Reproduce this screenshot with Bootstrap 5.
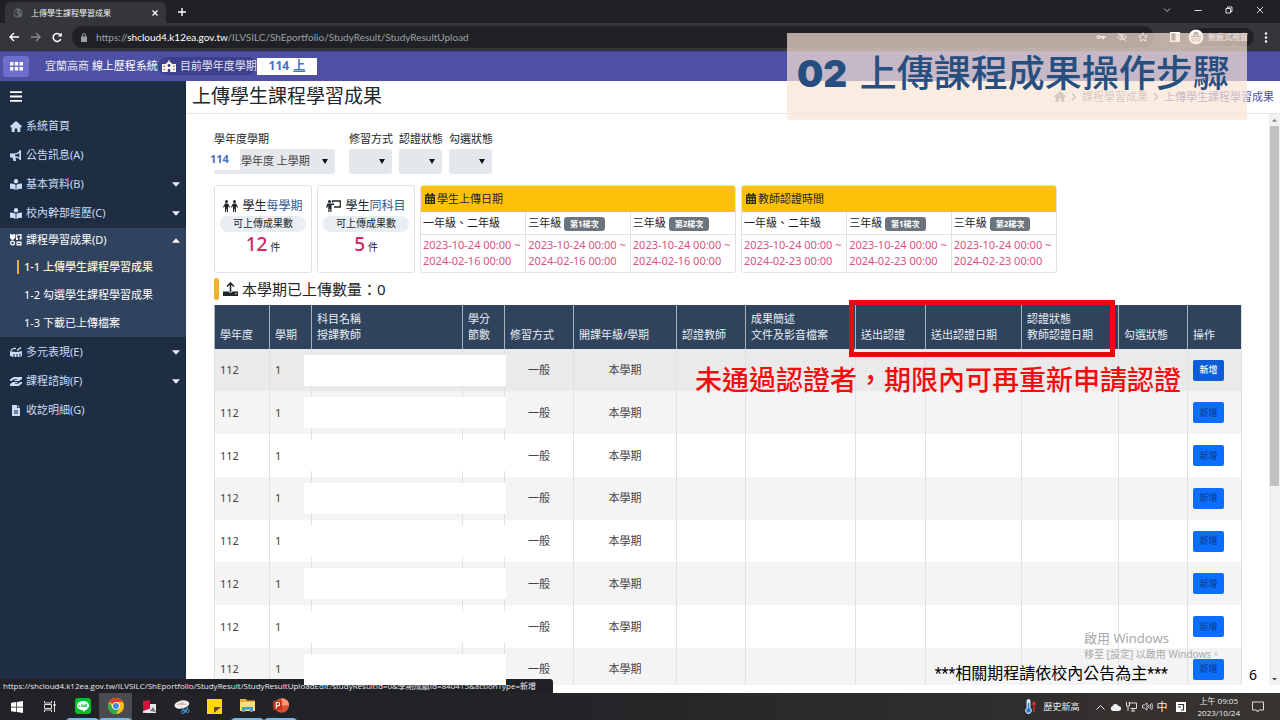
<!DOCTYPE html>
<html lang="zh-Hant">
<head>
<meta charset="utf-8">
<meta name="viewport" content="width=device-width, initial-scale=1">
<title>上傳學生課程學習成果</title>
<link rel="stylesheet" href="https://cdn.jsdelivr.net/npm/bootstrap@5.3.0/dist/css/bootstrap.min.css">
<style>
body{font:11px/16px "Noto Sans","Noto Sans CJK TC",sans-serif;color:#212529;height:100vh;overflow:hidden}
a{text-decoration:none;color:inherit}
svg{display:block;flex:none}
button{font:inherit}
/* browser frame */
.chrome-ui{font-family:"Open Sans","Noto Sans CJK TC",sans-serif;color:#f1f3f4}
.tabstrip{background:#202124;height:23px;padding-left:5px}
.tab-item{background:#35363a;width:161px;height:21px;margin-top:2px;border-radius:6px 6px 0 0;padding:0 8px;font-size:8px}
.toolbar{background:#35363a;height:28px;padding:0 12px 0 8px}
.omnibox{background:#202124;border-radius:11px;height:22px;color:#9aa0a6;padding:0 6px 0 8px}
.url{font-family:Lato,sans-serif;font-size:10px}
.plain{background:none;border:0;padding:0;color:inherit;display:flex}
.incog{background:#202124;border-radius:11px;height:18px;font-size:8px;width:66px}
/* system header */
.sysbar{background:#4d50a3;height:30px;color:#e4e5f6;border-top:1px solid #43458c}
.appsbtn{background:#6c70cc;border-radius:3px;width:26px;height:21px;color:#fff;justify-content:center;align-items:center}
.termpill{background:#3c3f8c;border-radius:9px;height:18px;padding:0 0 0 4px;gap:4px}
.termval{background:#fff;color:#4472c4;width:60px;height:17px;font-size:12px}
/* side menu */
.side{width:186px;background:#1e2d42;color:#c9dcf5}
.burger{height:31px;padding-left:10px;color:#fff}
.side a,.side .fold{height:29px;padding:0 6px 0 10px;gap:4px;display:flex;align-items:center;width:100%}
.side .open{background:#30435e;color:#fff;margin-bottom:1px}
.side .open .fold{height:25px}
.side .open a{height:28px;padding-left:24px;white-space:nowrap}
.side .open a.now{padding-left:17px;color:#fdf3cf;font-weight:500}
.now::before{content:"";width:2px;height:14px;background:#eeb033;margin-right:1px}
.arr{margin-left:auto}
/* content */
.titlebar{height:33px;border-bottom:1px solid #dee6ea;padding:0 6px}
.titlebar h1{font-size:19px;line-height:30px}
.crumbs{font-size:11px;color:#868e96;gap:5px}
.body-pad{padding:17px 28px 0}
.filters label{display:block;height:18px}
.filters select{border:0;background:#e4e7eb url("data:image/svg+xml,%3Csvg xmlns='http://www.w3.org/2000/svg' width='6' height='5'%3E%3Cpath d='M0 0h6L3 5z' fill='%23111'/%3E%3C/svg%3E") no-repeat right 7px center;border-radius:3px;height:25px;width:43px;appearance:none;color:#444;font-size:11px;padding:0 0 0 8px;display:block}
.filters select.wide{width:121px}
.yearfix{position:absolute;left:-4px;top:17px;width:30px;height:22px;background:#fff;color:#4472c4;font-size:11px;line-height:22px}
.quota{border:1px solid #dee2e6;border-radius:3px;width:98px;height:88px;padding-top:10px}
.quota h2{font-size:12px;line-height:20px}
.quota .kind{color:#36598f}
.quota .pill{background:#e9eef3;border-radius:8px;width:86px;height:16px;line-height:15px;font-size:10px}
.quota strong{font-size:19px;line-height:24px;font-weight:500;color:#d4245f}
.quota small{font-size:10px}
.period{width:316px;height:88px;border:1px solid #dee2e6;border-radius:3px;overflow:hidden}
.period h2{background:#ffc107;height:26px;padding-left:4px;font-size:11px}
.period table{width:100%;table-layout:fixed}
.period th{font-weight:400;height:23px;padding:0 2px;white-space:nowrap;border-bottom:1px solid #dee2e6}
.period td{color:#d9547f;padding:2px 0 3px 2px;white-space:nowrap}
.period th+th,.period td+td{border-left:1px solid #dee2e6}
.batch{background:#6c757d;font-size:8px;line-height:8px;padding:3px 6px;border-radius:3px}
.count{font-size:15px;height:22px}
.count::before{content:"";width:5px;height:22px;border-radius:3px;background:#f0b030;margin-right:4px}
.grid{table-layout:fixed;width:100%;height:386px}
.grid th{background:#2f435d;color:#e8eef5;font-weight:400;height:44px;padding:6px 0 6px 5px;vertical-align:bottom;border-left:1px solid #aab4c0;white-space:nowrap}
.grid td{padding:0 0 0 5px;border-left:1px solid #dee2e6;position:relative;color:#444;white-space:nowrap}
.grid th:last-child,.grid td:last-child{border-right:1px solid #dee2e6}
.grid td.mid{padding:0;text-align:center}
.grid tbody tr:nth-child(even){background:#f4f4f4}
.grid tbody tr:first-child{background:#eaeaea}
.hide{position:absolute;left:-8px;top:6px;width:202px;height:31px;background:#fff;z-index:5}
.addbtn{background:#0d6efd;border:0;border-radius:2px;width:31px;height:21px;font-size:9px;color:#0b3a80;padding:0;display:block}
tr:first-child .addbtn{background:#0b5ed7;color:#fff;font-weight:500}
.scroll{width:11px;background:#f1f1f1;padding:0 1px}
.thumb{background:#c1c1c1;height:63%}
/* slide annotations */
.banner{position:absolute;right:33px;top:33px;width:460px;height:87px;background:rgba(249,228,214,.7);color:#264f80;font-size:37px;line-height:80px;padding-left:10px;white-space:nowrap;z-index:6;font-weight:500}
.banner b{font-family:Inter,sans-serif;font-weight:900;margin-right:3px}
.redbox{position:absolute;right:126px;top:-5px;width:266px;height:57px;border:5px solid #e60b0f;z-index:6}
.rednote{position:absolute;right:60px;top:57px;font-size:27px;line-height:36px;font-weight:500;color:#f20d0d;white-space:nowrap;z-index:6}
.notice{position:absolute;right:112px;bottom:36px;font-family:Roboto,"Noto Sans CJK TC",sans-serif;font-size:16px;line-height:20px;color:#000;z-index:6}
.pageno{position:absolute;right:23px;bottom:36px;font-size:14px;line-height:18px;color:#000;z-index:6}
.activate{position:absolute;right:58px;bottom:59px;width:138px;color:#a9a9a9;font-size:10px;line-height:14px;z-index:6;white-space:nowrap}
.activate span{font-size:13px;line-height:17px;display:block}
.status{position:absolute;left:0;bottom:27px;height:14px;background:#202124;color:#e8eaed;font-size:8px;line-height:14px;padding:0 4px 0 3px;min-width:553px;border-radius:0 3px 0 0;z-index:2;white-space:nowrap}
/* taskbar */
.taskbar{height:27px;background:linear-gradient(90deg,#222327 40%,#383431);color:#eee;font-size:9px;line-height:12px;padding-right:16px}
.taskbar .app{width:33px;height:27px;display:flex;align-items:center;justify-content:center;background:none;border:0;padding:0}
.taskbar .on{border-bottom:2px solid #76b9ed;border-left:3px solid transparent;border-right:3px solid transparent}
.taskbar .sel{background:#4a4b4f}
</style>
</head>
<body class="d-flex flex-column position-relative">
<svg width="0" height="0" class="position-absolute"><defs>
<symbol id="dn" viewBox="0 0 8 5"><path d="M0 .3h8L4 4.700z" fill="#e8f1ff"/></symbol>
<symbol id="cal" viewBox="0 0 10 11"><path d="M2 0h1.500v1.500h3V0H8v1.500h2v2H0v-2h2zM0 4h10v7H0z" fill="#2b2a20"/><path d="M1.500 5.500h1.600v1.500H1.500zm2.700 0h1.600v1.500H4.200zm2.700 0h1.600v1.500H6.900zM1.500 8.200h1.600v1.500H1.500zm2.700 0h1.600v1.500H4.200zm2.700 0h1.600v1.500H6.900z" fill="#ffc107"/></symbol>
<symbol id="house" viewBox="0 0 12 11"><path d="M6 0l6 5.300-.8.9H10.300V11H7.300V7.500H4.700V11H1.700V6.200H.8L0 5.300z" fill="currentColor"/></symbol>
<symbol id="reader" viewBox="0 0 12 11"><circle cx="6" cy="2.200" r="2.200" fill="currentColor"/><path d="M0 4.500q3.500 0 5.600 1.300V11Q3.500 9.700 0 9.700zM12 4.500q-3.500 0-5.600 1.300V11Q8.500 9.700 12 9.700z" fill="currentColor"/></symbol>
</defs></svg>

<header class="chrome-ui">
<div class="tabstrip d-flex">
 <div class="tab-item d-flex align-items-center">
  <svg width="10" height="10" viewBox="0 0 10 10"><circle cx="5" cy="5" r="4.500" fill="#6d7075"/><path d="M1 4q2-3 4-2L4 5l2 1-1 3Q1 8 1 4zm6-2l2 3-1 1-2-2z" fill="#3f4145"/></svg>
  <span class="ms-2">上傳學生課程學習成果</span>
  <button class="plain ms-auto" aria-label="關閉分頁"><svg width="6" height="6" viewBox="0 0 6 6"><path d="M.5.5l5 5m0-5l-5 5" stroke="#fff" stroke-width="1.200"/></svg></button>
 </div>
 <button class="plain align-items-center ms-2 ps-1" aria-label="新分頁"><svg width="8" height="8" viewBox="0 0 8 8"><path d="M4 0v8M0 4h8" stroke="#fff" stroke-width="1.400"/></svg></button>
 <div class="ms-auto d-flex align-items-center pe-3" style="gap:23px;margin-bottom:4px">
  <svg width="8" height="8" viewBox="0 0 8 8"><path d="M1 2.500l3 3 3-3" fill="none" stroke="#bbb"/></svg>
  <svg width="8" height="8" viewBox="0 0 8 8"><path d="M.5 4.500h7" stroke="#ddd"/></svg>
  <svg width="8" height="8" viewBox="0 0 8 8"><path d="M1 2.500h4.500V7H1zM2.500 2.500V1H7v4.500H5.500" fill="none" stroke="#ddd"/></svg>
  <svg width="8" height="8" viewBox="0 0 8 8"><path d="M1 1l6 6m0-6L1 7" stroke="#ddd"/></svg>
 </div>
</div>
<div class="toolbar d-flex align-items-center">
 <button class="plain" aria-label="上一頁"><svg width="12" height="10" viewBox="0 0 12 10"><path d="M11 5H2m4-4L2 5l4 4" fill="none" stroke="#fff" stroke-width="1.400"/></svg></button>
 <button class="plain" style="margin:0 10px" aria-label="下一頁"><svg width="12" height="10" viewBox="0 0 12 10"><path d="M1 5h9M6 1l4 4-4 4" fill="none" stroke="#85888c" stroke-width="1.400"/></svg></button>
 <button class="plain" aria-label="重新載入"><svg width="10" height="11" viewBox="0 0 10 11"><path d="M8.800 7a4 4 0 1 1-.6-4.200" fill="none" stroke="#fff" stroke-width="1.500"/><path d="M9.800.5v4H5.800z" fill="#fff"/></svg></button>
 <div class="omnibox d-flex align-items-center flex-grow-1 me-3 ps-2" style="margin-left:10px">
  <svg class="me-2" width="8" height="9" viewBox="0 0 8 9"><path d="M1 3.500h6V9H1z" fill="#9aa0a6"/><path d="M2.500 4V2.200a1.500 1.500 0 0 1 3 0V4" fill="none" stroke="#9aa0a6"/></svg>
  <span class="url">https://<span class="text-white">shcloud4.k12ea.gov.tw</span>/ILVSILC/ShEportfolio/StudyResult/StudyResultUpload</span>
  <div class="ms-auto d-flex" style="gap:11px">
   <svg width="10" height="10" viewBox="0 0 10 10"><path d="M2.500 3a2 2 0 1 0 1.800 3H6v1.200h2V6h1.500V4H4.300A2 2 0 0 0 2.500 3zm0 1.200a.8.800 0 1 1 0 1.600.8.800 0 0 1 0-1.600z" fill="#ddd"/></svg>
   <svg width="10" height="10" viewBox="0 0 10 10"><path d="M.5 5Q5-.5 9.500 5 5 10 .5 5zM1 1l8 8" fill="none" stroke="#ddd"/><circle cx="5" cy="5" r="1.500" fill="#ddd"/></svg>
   <svg width="10" height="10" viewBox="0 0 10 10"><path d="M5 .8l1.300 2.900 3.100.3L7 6.100l.7 3L5 7.500 2.300 9.100l.7-3L.6 4l3.100-.3z" fill="none" stroke="#ddd"/></svg>
  </div>
 </div>
 <svg class="me-2" width="10" height="10" viewBox="0 0 10 10"><path d="M.7.7h8.600v8.600H.7z" fill="none" stroke="#fff" stroke-width="1.400"/><path d="M5.500 1H9v8H5.500z" fill="#fff"/></svg>
 <div class="incog d-flex align-items-center">
  <svg width="16" height="16" viewBox="0 0 16 16"><circle cx="8" cy="8" r="7.500" fill="#fff"/><path d="M5 6.500L6 3.500h4l1 3zM3 7h10v1H3z" fill="#55585c"/><circle cx="5.700" cy="10.500" r="1.600" fill="none" stroke="#55585c"/><circle cx="10.300" cy="10.500" r="1.600" fill="none" stroke="#55585c"/></svg>
  <span class="ms-1">無痕式視窗</span>
 </div>
 <svg style="margin-left:10px" width="4" height="11" viewBox="0 0 4 11"><g fill="#fff"><circle cx="2" cy="1.500" r="1.200"/><circle cx="2" cy="5.500" r="1.200"/><circle cx="2" cy="9.500" r="1.200"/></g></svg>
</div>
</header>

<nav class="sysbar d-flex align-items-center" style="padding-left:3px">
 <button class="plain appsbtn" aria-label="應用程式"><svg width="13" height="9" viewBox="0 0 13 9"><path d="M0 0h3.400v3.600H0zm4.800 0h3.400v3.600H4.800zm4.800 0H13v3.600H9.600zM0 5h3.400v3.600H0zm4.800 0h3.400v3.600H4.800zm4.800 0H13v3.600H9.600z" fill="#fff"/></svg></button>
 <span class="ms-3">宜蘭高商 <span class="text-white">線上歷程系統</span></span>
 <span class="termpill d-flex align-items-center">
  <svg width="14" height="12" viewBox="0 0 14 12"><path d="M0 4h3.500L7 1l3.500 3H14v8H8.200V9H5.800v3H0z" fill="#fff5dc"/><path d="M7 0v1.500" stroke="#fff"/><path d="M1.500 5.500h1V7h-1zm0 3h1V10h-1zm10-3h1V7h-1zm0 3h1V10h-1z" fill="#3c3f8c"/><circle cx="7" cy="5.500" r="1.400" fill="#3c3f8c"/></svg>目前學年度學期</span>
 <span class="termval d-flex align-items-center justify-content-center fw-bold">114<u class="ms-1">上</u></span>
</nav>

<div class="d-flex flex-grow-1" style="min-height:0">
<aside class="side flex-shrink-0">
 <button class="plain burger align-items-center" aria-label="選單"><svg width="12" height="11" viewBox="0 0 12 11"><path d="M0 1.200h12M0 5.500h12M0 9.800h12" stroke="#fff" stroke-width="1.800"/></svg></button>
 <a href="#"><svg width="12" height="11"><use href="#house"/></svg>系統首頁</a>
 <a href="#"><svg width="12" height="11" viewBox="0 0 12 11"><path d="M0 3.500h4Q7 3.500 9.500 1V0H11v10H9.500V9Q8 7.800 5.500 7.500L6 11H3.500L2.500 7.500H0z" fill="currentColor"/><path d="M5 4.800q2.500-.3 4.300-1.800v4.500Q7.500 6.200 5 6z" fill="#1e2d42"/></svg>公告訊息(A)</a>
 <button class="plain fold"><svg width="12" height="11"><use href="#reader"/></svg>基本資料(B)<svg class="arr" width="8" height="5"><use href="#dn"/></svg></button>
 <button class="plain fold"><svg width="12" height="11"><use href="#reader"/></svg>校內幹部經歷(C)<svg class="arr" width="8" height="5"><use href="#dn"/></svg></button>
 <div class="open">
  <button class="plain fold"><svg width="12" height="12" viewBox="0 0 12 12"><path d="M.5.500l2 1 2-1v3l-2 2-2-2zM6.500 5V1.200L11 .5v4" fill="none" stroke="#fff" stroke-width="1.300"/><path d="M6 4h2v2H6zm3.500-.5h2v2h-2zM0 1h5l-.5 3h-4z" fill="#fff"/><circle cx="2.500" cy="9" r="1.900" fill="none" stroke="#fff" stroke-width="1.300"/><path d="M6.500 7.500h5v4h-5z" fill="#fff"/><path d="M7.800 9.500h2.400" stroke="#30435e"/></svg>課程學習成果(D)<svg class="arr" width="8" height="5" viewBox="0 0 8 5"><path d="M0 4.700h8L4 .3z" fill="#fff"/></svg></button>
  <a class="now" href="#">1-1 上傳學生課程學習成果</a>
  <a href="#">1-2 勾選學生課程學習成果</a>
  <a href="#">1-3 下載已上傳檔案</a>
 </div>
 <button class="plain fold"><svg width="12" height="11" viewBox="0 0 12 11"><path d="M0 4q6 2 12 0v5l-1.500 1V6.500h-1V10h-2V7h-1v3h-2V7h-1v3L0 9z" fill="currentColor"/><path d="M1 3.500q1-2.500 5-2M7 3.500l4-3" fill="none" stroke="currentColor" stroke-width="1.400"/></svg>多元表現(E)<svg class="arr" width="8" height="5"><use href="#dn"/></svg></button>
 <button class="plain fold"><svg width="12" height="11" viewBox="0 0 12 11"><path d="M0 3.500L3.500 1H12v2L9 5H4.500V4H7V3.200H4L1.500 5H0zM12 7.500L8.500 10H0V8l3-2h4.500v1H5v.8h3L10.500 6H12z" fill="currentColor"/></svg>課程諮詢(F)<svg class="arr" width="8" height="5"><use href="#dn"/></svg></button>
 <a href="#"><svg width="12" height="11" viewBox="0 0 12 11"><path d="M2 0h5v3h3v8H2z" fill="currentColor"/><path d="M7.800 0L10 2.200H7.800z" fill="currentColor"/><path d="M4 6h4M4 8h4" stroke="#1e2d42"/></svg>收訖明細(G)</a>
</aside>

<div class="flex-grow-1 d-flex flex-column" style="min-width:0">
 <div class="titlebar d-flex align-items-start justify-content-between flex-shrink-0">
  <h1 class="m-0 fw-normal">上傳學生課程學習成果</h1>
  <nav class="crumbs d-flex align-items-center pt-2"><a href="#" aria-label="首頁"><svg width="12" height="11"><use href="#house"/></svg></a>
   <svg width="6" height="8" viewBox="0 0 6 8"><path d="M1 .5L4.500 4 1 7.500" fill="none" stroke="#6c757d" stroke-width="1.300"/></svg><a href="#">課程學習成果</a>
   <svg width="6" height="8" viewBox="0 0 6 8"><path d="M1 .5L4.500 4 1 7.500" fill="none" stroke="#6c757d" stroke-width="1.300"/></svg><span style="color:#4d50a3">上傳學生課程學習成果</span></nav>
 </div>
 <div class="d-flex flex-grow-1 mb-2" style="min-height:0">
 <main class="body-pad flex-grow-1 overflow-hidden" style="min-width:0">
  <form class="filters d-flex" style="gap:6px;margin-bottom:11px">
   <div class="position-relative me-2"><label for="f1">學年度學期</label><select id="f1" class="wide"><option>112學年度 上學期</option></select><span class="yearfix fw-bold">114</span></div>
   <div><label for="f2">修習方式</label><select id="f2"><option></option></select></div>
   <div><label for="f3">認證狀態</label><select id="f3"><option></option></select></div>
   <div><label for="f4">勾選狀態</label><select id="f4"><option></option></select></div>
  </form>
  <div class="d-flex" style="gap:5px">
   <section class="quota d-flex flex-column align-items-center">
    <h2 class="m-0 fw-normal d-flex align-items-center gap-1"><svg width="15" height="12" viewBox="0 0 15 12"><g fill="#212529"><circle cx="3.500" cy="1.500" r="1.500"/><path d="M2 3.500h3L7 7l-.8.700L5 6v6H3.900V9h-.8v3H2V6L.8 7.700 0 7z"/><circle cx="11.500" cy="1.500" r="1.500"/><path d="M10 3.500h3L15 7l-.8.700L13 6v6h-1.100V9h-.8v3H10V6L8.800 7.700 8 7z"/></g></svg><span>學生<span class="kind">每學期</span></span></h2>
    <span class="pill text-center">可上傳成果數</span>
    <span><strong>12</strong> <small>件</small></span>
   </section>
   <section class="quota d-flex flex-column align-items-center">
    <h2 class="m-0 fw-normal d-flex align-items-center gap-1"><svg width="15" height="12" viewBox="0 0 15 12"><g fill="#212529"><circle cx="3.500" cy="1.500" r="1.500"/><path d="M1.500 3.500H8V5H5.500v7H4.300V9h-.8v3H2.300V5.500L1 8l-1-.7z"/></g><path d="M6.500 2.500V1h7.800v6H8" fill="none" stroke="#212529" stroke-width="1.300"/></svg><span>學生<span class="kind">同科目</span></span></h2>
    <span class="pill text-center">可上傳成果數</span>
    <span><strong>5</strong> <small>件</small></span>
   </section>
   <section class="period">
    <h2 class="m-0 fw-normal d-flex align-items-center" style="gap:2px"><svg width="10" height="11"><use href="#cal"/></svg>學生上傳日期</h2>
    <table><thead><tr><th>一年級、二年級</th><th>三年級 <span class="badge batch">第1梯次</span></th><th>三年級 <span class="badge batch">第2梯次</span></th></tr></thead>
    <tbody><tr><td>2023-10-24 00:00 ~<br>2024-02-16 00:00</td><td>2023-10-24 00:00 ~<br>2024-02-16 00:00</td><td>2023-10-24 00:00 ~<br>2024-02-16 00:00</td></tr></tbody></table>
   </section>
   <section class="period">
    <h2 class="m-0 fw-normal d-flex align-items-center" style="gap:2px"><svg width="10" height="11"><use href="#cal"/></svg>教師認證時間</h2>
    <table><thead><tr><th>一年級、二年級</th><th>三年級 <span class="badge batch">第1梯次</span></th><th>三年級 <span class="badge batch">第2梯次</span></th></tr></thead>
    <tbody><tr><td>2023-10-24 00:00 ~<br>2024-02-23 00:00</td><td>2023-10-24 00:00 ~<br>2024-02-23 00:00</td><td>2023-10-24 00:00 ~<br>2024-02-23 00:00</td></tr></tbody></table>
   </section>
  </div>
  <div class="count d-flex align-items-center" style="margin:5px 0"><svg class="me-1" width="15" height="14" viewBox="0 0 15 14"><path d="M7.500 10V1.500M4 4.500l3.500-3.500L11 4.500" fill="none" stroke="#212529" stroke-width="1.600"/><path d="M0 9.500h5.500q2 2.500 4 0H15V14H0z" fill="#212529"/><circle cx="12.800" cy="11.800" r=".7" fill="#fff"/></svg>本學期已上傳數量：0</div>
  <div class="position-relative">
  <table class="grid">
   <colgroup><col style="width:55px"><col style="width:42px"><col style="width:151px"><col style="width:42px"><col style="width:69px"><col style="width:103px"><col style="width:69px"><col style="width:110px"><col style="width:70px"><col style="width:96px"><col style="width:97px"><col style="width:69px"><col style="width:54px"></colgroup>
   <thead><tr><th>學年度</th><th>學期</th><th>科目名稱<br>授課教師</th><th>學分<br>節數</th><th>修習方式</th><th>開課年級/學期</th><th>認證教師</th><th>成果簡述<br>文件及影音檔案</th><th>送出認證</th><th>送出認證日期</th><th>認證狀態<br>教師認證日期</th><th>勾選狀態</th><th>操作</th></tr></thead>
   <tbody>
   <tr><td>112</td><td>1</td><td><span class="hide"></span></td><td></td><td class="mid">一般</td><td class="mid">本學期</td><td></td><td></td><td></td><td></td><td></td><td></td><td><button class="addbtn">新增</button></td></tr>
   <tr><td>112</td><td>1</td><td><span class="hide"></span></td><td></td><td class="mid">一般</td><td class="mid">本學期</td><td></td><td></td><td></td><td></td><td></td><td></td><td><button class="addbtn">新增</button></td></tr>
   <tr><td>112</td><td>1</td><td><span class="hide"></span></td><td></td><td class="mid">一般</td><td class="mid">本學期</td><td></td><td></td><td></td><td></td><td></td><td></td><td><button class="addbtn">新增</button></td></tr>
   <tr><td>112</td><td>1</td><td><span class="hide"></span></td><td></td><td class="mid">一般</td><td class="mid">本學期</td><td></td><td></td><td></td><td></td><td></td><td></td><td><button class="addbtn">新增</button></td></tr>
   <tr><td>112</td><td>1</td><td><span class="hide"></span></td><td></td><td class="mid">一般</td><td class="mid">本學期</td><td></td><td></td><td></td><td></td><td></td><td></td><td><button class="addbtn">新增</button></td></tr>
   <tr><td>112</td><td>1</td><td><span class="hide"></span></td><td></td><td class="mid">一般</td><td class="mid">本學期</td><td></td><td></td><td></td><td></td><td></td><td></td><td><button class="addbtn">新增</button></td></tr>
   <tr><td>112</td><td>1</td><td><span class="hide"></span></td><td></td><td class="mid">一般</td><td class="mid">本學期</td><td></td><td></td><td></td><td></td><td></td><td></td><td><button class="addbtn">新增</button></td></tr>
   <tr><td>112</td><td>1</td><td><span class="hide"></span></td><td></td><td class="mid">一般</td><td class="mid">本學期</td><td></td><td></td><td></td><td></td><td></td><td></td><td><button class="addbtn">新增</button></td></tr>
   </tbody>
  </table>
  <div class="redbox"></div>
  <div class="rednote">未通過認證者，期限內可再重新申請認證</div>
  </div>
 </main>
 <div class="scroll d-flex flex-column flex-shrink-0">
  <svg width="9" height="12" viewBox="0 0 9 12"><path d="M2 7.500h5L4.500 5z" fill="#777"/></svg>
  <div class="thumb"></div>
  <svg class="mt-auto" width="9" height="12" viewBox="0 0 9 12"><path d="M2 5h5L4.500 7.500z" fill="#444"/></svg>
 </div>
 </div>
</div>
</div>

<footer class="taskbar chrome-ui d-flex align-items-center flex-shrink-0">
 <button class="app" aria-label="開始"><svg width="12" height="12" viewBox="0 0 12 12"><path d="M0 1.700L5.300 1v4.700H0zM6 .9L12 0v5.700H6zM0 6.400h5.300V11L0 10.300zM6 6.400h6V12l-6-.9z" fill="#fff"/></svg></button>
 <button class="app" aria-label="工作檢視"><svg width="12" height="11" viewBox="0 0 12 11"><path d="M.5 0v2h7V0M.5 11V9h7v2M.5 3.500h7v4h-7zM10.500 0v11" fill="none" stroke="#ddd"/><path d="M9.500 3h2v2h-2z" fill="#fff"/></svg></button>
 <button class="app on" aria-label="LINE"><svg width="16" height="16" viewBox="0 0 16 16"><rect width="16" height="16" rx="3" fill="#06c02b"/><path d="M8 3c3.500 0 6 2 6 4.700 0 2.500-3 4.500-6 6v-1.600C4.500 12 2 10.200 2 7.700S4.500 3 8 3z" fill="#fff"/><path d="M4 6.500v2.300h1.500M6.500 6.300v2.700M7.700 9V6.500L9.500 9V6.500M12 6.500h-1.400v2.300H12M10.600 7.700H12" fill="none" stroke="#06c02b" stroke-width=".7"/></svg></button>
 <button class="app sel on" aria-label="Chrome"><svg width="16" height="16" viewBox="0 0 16 16"><circle cx="8" cy="8" r="8" fill="#fbc116"/><path d="M8 8L1.100 4A8 8 0 0 1 14.900 4H8z" fill="#e33b2e"/><path d="M1.100 4A8 8 0 0 0 8 16l3.500-6L8 8 4.500 10z" fill="#2da94f"/><circle cx="8" cy="8" r="3.800" fill="#fff"/><circle cx="8" cy="8" r="3" fill="#4285f4"/></svg></button>
 <button class="app" aria-label="文件工具"><svg width="14" height="14" viewBox="0 0 14 14"><path d="M5 4h9v9H3z" fill="#e8e8e8"/><path d="M1 1l7-1v9l-7 2z" fill="#d3123f"/><path d="M1 11l7-2v3l-7 1z" fill="#f1f1f1"/><path d="M8 11l3-4 3 5z" fill="#777"/></svg></button>
 <button class="app" aria-label="剪取工具"><svg width="16" height="14" viewBox="0 0 16 14"><ellipse cx="8" cy="4.500" rx="7.500" ry="4" fill="#eee" transform="rotate(-12 8 5)"/><path d="M2 5l6-3 5 3z" fill="#d9b5b5"/><path d="M8 8l5 4M14 7l-4 6" stroke="#3b94d0" stroke-width="1.300"/><circle cx="9" cy="12" r="1.600" fill="none" stroke="#3b94d0"/><circle cx="13.500" cy="11" r="1.600" fill="none" stroke="#3b94d0"/></svg></button>
 <button class="app" aria-label="自黏便箋"><svg width="15" height="15" viewBox="0 0 15 15"><path d="M0 0h15v15H0z" fill="#ffd90a"/><path d="M7 8h7l-7 6z" fill="#58502a"/></svg></button>
 <button class="app on" aria-label="檔案總管"><svg width="15" height="13" viewBox="0 0 15 13"><path d="M0 0h6l1 1.500h8V12H0z" fill="#e8b33c"/><path d="M0 3h15v9H0z" fill="#fcdc7c"/><path d="M2 8h11v5h-3v-2.500H5V13H2z" fill="#3d9ae2"/></svg></button>
 <button class="app on" aria-label="PowerPoint"><svg width="16" height="15" viewBox="0 0 16 15"><circle cx="8.700" cy="7.500" r="7.300" fill="#d9502f"/><path d="M8.700.2A7.300 7.300 0 0 1 16 7.500H8.700z" fill="#ff9475"/><rect y="3" width="9" height="9" rx="1" fill="#b7341a"/><path d="M3.300 10.500v-6h1.700a1.600 1.600 0 0 1 0 3.400H3.300" fill="none" stroke="#fff" stroke-width="1.100"/></svg></button>
 <div class="ms-auto d-flex align-items-center">
  <svg width="12" height="15" viewBox="0 0 12 15"><path d="M2.500 2a2 2 0 0 1 4 0v7a3.200 3.200 0 1 1-4 0z" fill="#cfe6fb"/><circle cx="4.500" cy="11.500" r="2.300" fill="#1f82d8"/><path d="M4.500 4v7" stroke="#1f82d8" stroke-width="1.400"/><path d="M10 13V4M8 6l2-3 2 3" stroke="#e33022" stroke-width="1.300" fill="none"/></svg>
  <span class="ms-2 me-3">歷史新高</span>
  <span class="d-flex align-items-center" style="gap:5px">
  <svg width="9" height="6" viewBox="0 0 9 6"><path d="M.5 5.500l4-4 4 4" fill="none" stroke="#eee"/></svg>
  <svg width="11" height="8" viewBox="0 0 11 8"><path d="M2.500 8a2.500 2.500 0 0 1 0-4.800A3.200 3.200 0 0 1 8.500 3 2.500 2.500 0 0 1 8.700 8z" fill="#eee"/></svg>
  <svg width="11" height="10" viewBox="0 0 11 10"><path d="M2.500 1h8v5.500h-6M7 6.500V9m-2 0h4M.5 0v4h3V0M2 4v5" fill="none" stroke="#ddd"/></svg>
  <svg width="11" height="9" viewBox="0 0 11 9"><path d="M.5 3h2L5 .8v7.400L2.500 6h-2zM6.500 3q1 1.500 0 3M8 2q1.800 2.500 0 5M9.600 1q2 3.500 0 7" fill="none" stroke="#ddd" stroke-width=".9"/></svg></span>
  <span class="ms-1" style="font-size:11px">中</span>
  <svg class="mx-2" width="10" height="10" viewBox="0 0 10 10"><path d="M0 0h10v10H0z" fill="#fff"/><path d="M2 2.500h5.500V8H5M2 5h3" fill="none" stroke="#333" stroke-width="1.200"/></svg>
  <time class="text-center ms-1 me-2" style="font-size:8px">上午 09:05<br>2023/10/24</time>
  <svg class="ms-1" width="12" height="12" viewBox="0 0 12 12"><path d="M.5 1h11v8H7l-1.500 2L4.500 9h-4z" fill="none" stroke="#ddd"/></svg>
 </div>
</footer>
<div class="status chrome-ui">https://shcloud4.k12ea.gov.tw/ILVSILC/ShEportfolio/StudyResult/StudyResultUploadEdit?studyResultId=0&amp;學期成績Id=840415&amp;actionType=新增</div>
<div class="banner"><b>02</b> 上傳課程成果操作步驟</div>
<div class="activate"><span>啟用 Windows</span>移至 [設定] 以啟用 Windows。</div>
<div class="notice">***相關期程請依校內公告為主***</div>
<div class="pageno">6</div>
<script src="https://cdn.jsdelivr.net/npm/bootstrap@5.3.0/dist/js/bootstrap.bundle.min.js"></script>
</body>
</html>
